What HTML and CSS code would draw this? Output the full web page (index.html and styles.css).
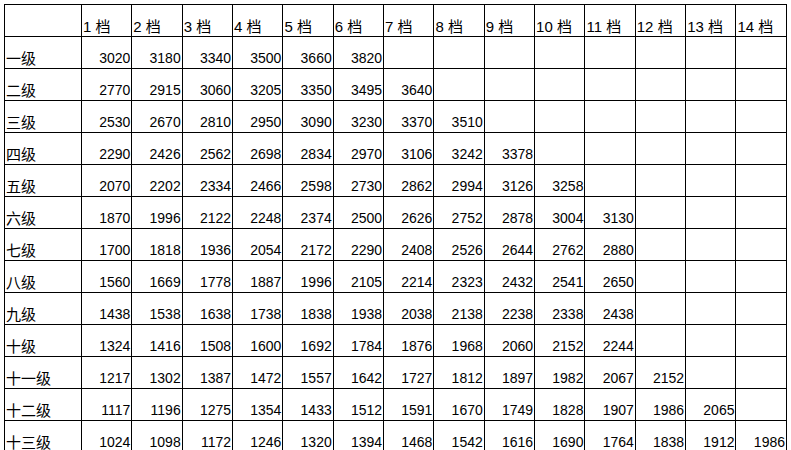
FILE: index.html
```html
<!DOCTYPE html>
<html lang="zh">
<head>
<meta charset="utf-8">
<link rel="stylesheet" href="styles.css">
</head>
<body>
<table class="grid">
<colgroup>
<col class="c-label">
<col><col><col><col><col><col><col><col><col><col><col><col><col><col>
</colgroup>
<tr class="head"><td></td><td>1 档</td><td>2 档</td><td>3 档</td><td>4 档</td><td>5 档</td><td>6 档</td><td>7 档</td><td>8 档</td><td>9 档</td><td>10 档</td><td>11 档</td><td>12 档</td><td>13 档</td><td>14 档</td></tr>
<tr><td class="lbl">一级</td><td class="n">3020</td><td class="n">3180</td><td class="n">3340</td><td class="n">3500</td><td class="n">3660</td><td class="n">3820</td><td></td><td></td><td></td><td></td><td></td><td></td><td></td><td></td></tr>
<tr><td class="lbl">二级</td><td class="n">2770</td><td class="n">2915</td><td class="n">3060</td><td class="n">3205</td><td class="n">3350</td><td class="n">3495</td><td class="n">3640</td><td></td><td></td><td></td><td></td><td></td><td></td><td></td></tr>
<tr><td class="lbl">三级</td><td class="n">2530</td><td class="n">2670</td><td class="n">2810</td><td class="n">2950</td><td class="n">3090</td><td class="n">3230</td><td class="n">3370</td><td class="n">3510</td><td></td><td></td><td></td><td></td><td></td><td></td></tr>
<tr><td class="lbl">四级</td><td class="n">2290</td><td class="n">2426</td><td class="n">2562</td><td class="n">2698</td><td class="n">2834</td><td class="n">2970</td><td class="n">3106</td><td class="n">3242</td><td class="n">3378</td><td></td><td></td><td></td><td></td><td></td></tr>
<tr><td class="lbl">五级</td><td class="n">2070</td><td class="n">2202</td><td class="n">2334</td><td class="n">2466</td><td class="n">2598</td><td class="n">2730</td><td class="n">2862</td><td class="n">2994</td><td class="n">3126</td><td class="n">3258</td><td></td><td></td><td></td><td></td></tr>
<tr><td class="lbl">六级</td><td class="n">1870</td><td class="n">1996</td><td class="n">2122</td><td class="n">2248</td><td class="n">2374</td><td class="n">2500</td><td class="n">2626</td><td class="n">2752</td><td class="n">2878</td><td class="n">3004</td><td class="n">3130</td><td></td><td></td><td></td></tr>
<tr><td class="lbl">七级</td><td class="n">1700</td><td class="n">1818</td><td class="n">1936</td><td class="n">2054</td><td class="n">2172</td><td class="n">2290</td><td class="n">2408</td><td class="n">2526</td><td class="n">2644</td><td class="n">2762</td><td class="n">2880</td><td></td><td></td><td></td></tr>
<tr><td class="lbl">八级</td><td class="n">1560</td><td class="n">1669</td><td class="n">1778</td><td class="n">1887</td><td class="n">1996</td><td class="n">2105</td><td class="n">2214</td><td class="n">2323</td><td class="n">2432</td><td class="n">2541</td><td class="n">2650</td><td></td><td></td><td></td></tr>
<tr><td class="lbl">九级</td><td class="n">1438</td><td class="n">1538</td><td class="n">1638</td><td class="n">1738</td><td class="n">1838</td><td class="n">1938</td><td class="n">2038</td><td class="n">2138</td><td class="n">2238</td><td class="n">2338</td><td class="n">2438</td><td></td><td></td><td></td></tr>
<tr><td class="lbl">十级</td><td class="n">1324</td><td class="n">1416</td><td class="n">1508</td><td class="n">1600</td><td class="n">1692</td><td class="n">1784</td><td class="n">1876</td><td class="n">1968</td><td class="n">2060</td><td class="n">2152</td><td class="n">2244</td><td></td><td></td><td></td></tr>
<tr><td class="lbl">十一级</td><td class="n">1217</td><td class="n">1302</td><td class="n">1387</td><td class="n">1472</td><td class="n">1557</td><td class="n">1642</td><td class="n">1727</td><td class="n">1812</td><td class="n">1897</td><td class="n">1982</td><td class="n">2067</td><td class="n">2152</td><td></td><td></td></tr>
<tr><td class="lbl">十二级</td><td class="n">1117</td><td class="n">1196</td><td class="n">1275</td><td class="n">1354</td><td class="n">1433</td><td class="n">1512</td><td class="n">1591</td><td class="n">1670</td><td class="n">1749</td><td class="n">1828</td><td class="n">1907</td><td class="n">1986</td><td class="n">2065</td><td></td></tr>
<tr><td class="lbl">十三级</td><td class="n">1024</td><td class="n">1098</td><td class="n">1172</td><td class="n">1246</td><td class="n">1320</td><td class="n">1394</td><td class="n">1468</td><td class="n">1542</td><td class="n">1616</td><td class="n">1690</td><td class="n">1764</td><td class="n">1838</td><td class="n">1912</td><td class="n">1986</td></tr>
</table>
</body>
</html>
```
FILE: styles.css
```css
html, body {
  margin: 0;
  padding: 0;
  background: #fff;
}
body {
  padding: 4px 0 0 4px;
  overflow: hidden;
}
.grid {
  border-collapse: collapse;
  table-layout: fixed;
  width: 783px;
  font-family: "Liberation Sans", "Noto Sans CJK SC", sans-serif;
  font-size: 15px;
  color: #000;
}
.c-label {
  width: 77px;
}
.grid td {
  border: 1px solid #000;
  height: 29px;
  padding: 0 1px 2px 1px;
  vertical-align: bottom;
  text-align: left;
  line-height: 15px;
  white-space: nowrap;
  overflow: visible;
}
.grid td.n {
  text-align: right;
  font-size: 14px;
}
```
